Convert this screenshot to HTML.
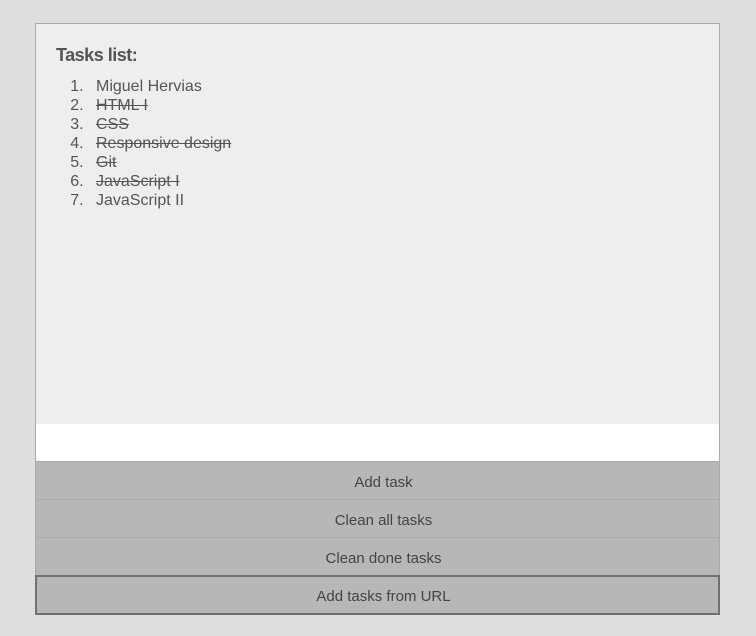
<!DOCTYPE html>
<html><head><style>
body{margin:0;background:#dedede;width:756px;height:636px;font-family:"Liberation Sans",sans-serif;color:#555;position:relative}
.box{position:absolute;left:35px;top:23px;width:683px;height:400px;background:#eee;border:1px solid #aaa;border-bottom:1px solid #aaa}
h2{position:absolute;left:20px;top:21px;margin:0;font-size:18px;font-weight:bold;letter-spacing:-0.5px}
ol{position:absolute;left:32px;top:53px;margin:0;padding:0 0 0 20px;font-size:16px;line-height:19px}
ol li{padding-left:8px}
s{text-decoration:line-through}
.inp{position:absolute;left:35px;top:424px;width:683px;height:37px;background:#fff;border:1px solid #aaa;border-top:none}
.btn{position:absolute;left:35px;width:671px;padding-left:12px;height:37px;background:#b7b7b7;border:1px solid #aaa;border-top:none;text-align:center;line-height:42px;font-size:15px;color:#444}
.last{border:2px solid #707070;width:669px;height:36px;line-height:40px}
</style></head><body>
<div class="box">
<h2>Tasks list:</h2>
<ol>
<li>Miguel Hervias</li>
<li><s>HTML I</s></li>
<li><s>CSS</s></li>
<li><s>Responsive design</s></li>
<li><s>Git</s></li>
<li><s>JavaScript I</s></li>
<li>JavaScript II</li>
</ol>
</div>
<div class="inp"></div>
<div class="btn" style="top:462px">Add task</div>
<div class="btn" style="top:500px">Clean all tasks</div>
<div class="btn" style="top:538px">Clean done tasks</div>
<div class="btn last" style="top:575px">Add tasks from URL</div>
</body></html>
